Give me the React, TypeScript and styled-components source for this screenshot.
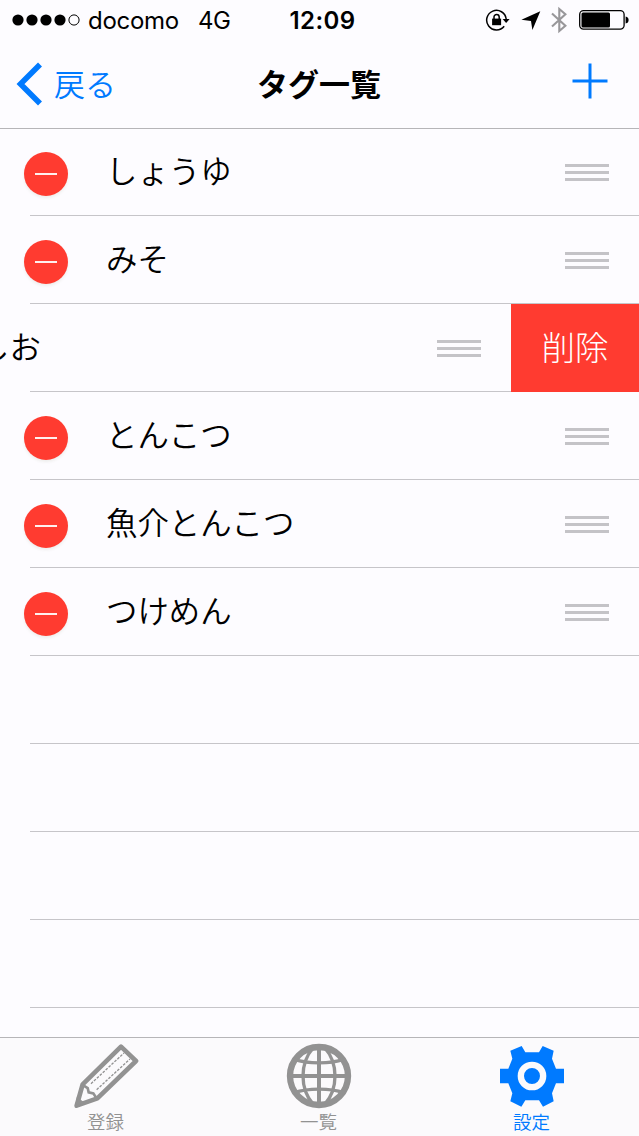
import React from 'react';
import styled, { createGlobalStyle } from 'styled-components';

const BLUE = '#007aff';
const RED = '#ff3b30';
const LINE = '#c6c5c9';
const JP = `"Noto Sans CJK JP", sans-serif`;

const GlobalStyle = createGlobalStyle`
  * { box-sizing: border-box; }
  body { margin: 0; background: #fdfcff; }
  button { border: 0; padding: 0; background: none; font: inherit; color: inherit; }
`;

const Screen = styled.div`
  width: 639px;
  height: 1136px;
  display: flex;
  flex-direction: column;
  overflow: hidden;
  background: #fdfcff;
  color: #000;
  font-family: ${JP};
`;

const Header = styled.header`
  height: 129px;
  flex: none;
  border-bottom: 1px solid #b6b5b8;
`;

const StatusBar = styled.div`
  height: 40px;
  display: grid;
  grid-template-columns: 1fr auto 1fr;
  align-items: center;
  padding: 0 8px 0 12px;
  font-family: Inter, sans-serif;
  font-size: 24px;
  line-height: 38px;
`;

const Carrier = styled.div`
  display: flex;
  align-items: center;
`;

const Signal = styled.svg`
  width: 68px;
  height: 12px;
  margin-right: 8px;
`;

const CarrierName = styled.span`
  width: 110px;
  padding-top: 2px;
  letter-spacing: -0.3px;
`;

const Network = styled.span`
  padding-top: 2px;
  letter-spacing: -0.4px;
`;

const Clock = styled.div`
  padding: 2px 0 0 2px;
  font-weight: 600;
  letter-spacing: 0.4px;
`;

const StatusIcons = styled.svg`
  width: 144px;
  height: 30px;
  justify-self: end;
  margin-right: 2px;
`;

const NavBar = styled.nav`
  height: 88px;
  display: grid;
  grid-template-columns: 1fr auto 1fr;
  align-items: center;
  padding: 0 31px 0 16px;
  font-size: 31px;
  line-height: 44px;
`;

const BackButton = styled.button`
  display: flex;
  align-items: center;
  gap: 11px;
  color: ${BLUE};
  font-weight: 350;
`;

const BackLabel = styled.span`
  padding-bottom: 2px;
`;

const Title = styled.h1`
  margin: 0;
  padding-bottom: 3px;
  font-size: 31px;
  font-weight: 700;
  transform: translateX(7px);
`;

const AddButton = styled.button`
  justify-self: end;
  display: flex;
  padding-bottom: 6px;
`;

const List = styled.ul`
  flex: 1;
  min-height: 0;
  margin: -1px 0 0;
  padding: 0;
  list-style: none;
  overflow: hidden;
`;

const Row = styled.li<{ $swiped?: boolean }>`
  height: 88px;
  display: flex;
  justify-content: ${(p) => (p.$swiped ? 'flex-end' : 'flex-start')};
  background: linear-gradient(${LINE}, ${LINE}) 30px 100% / 100% 1px no-repeat;
`;

const RowContent = styled.div`
  width: 639px;
  flex: none;
  display: flex;
  align-items: center;
  padding: 0 30px 0 24px;
`;

const RemoveButton = styled.button`
  width: 44px;
  height: 44px;
  margin: 4px 38px 0 0;
  display: flex;
  align-items: center;
  justify-content: center;
  border-radius: 50%;
  background: ${RED};
  box-shadow: 0 2px 3px rgba(90, 100, 60, 0.09);
`;

const Minus = styled.span`
  width: 22px;
  height: 2px;
  background: #fff0ee;
`;

const Label = styled.span`
  flex: 1;
  padding-bottom: 5px;
  font-size: 31.4px;
  font-weight: 350;
  line-height: 44px;
  white-space: nowrap;
`;

const Handle = styled.span`
  width: 44px;
  height: 17px;
  display: flex;
  flex-direction: column;
  justify-content: space-between;
`;

const HandleLine = styled.span`
  height: 3px;
  background: #c4c3c7;
`;

const DeleteButton = styled.button`
  width: 128px;
  height: 88px;
  flex: none;
  padding-bottom: 5px;
  background: ${RED};
  color: #fff;
  font-size: 33.5px;
  font-weight: 300;
`;

const TabBar = styled.footer`
  height: 99px;
  flex: none;
  display: grid;
  grid-template-columns: repeat(3, 213px);
  border-top: 1px solid #b6b5b8;
  background: #fbfafc;
`;

const Tab = styled.button<{ $active?: boolean }>`
  display: flex;
  flex-direction: column;
  align-items: center;
  padding: 5px 2px 0 0;
  color: ${(p) => (p.$active ? BLUE : '#929292')};
`;

const TabIcon = styled.svg`
  width: 66px;
  height: 66px;
`;

const TabLabel = styled.span`
  font-size: 18.5px;
  font-weight: 350;
  line-height: 24px;
`;

const tags = ['しょうゆ', 'みそ', 'しお', 'とんこつ', '魚介とんこつ', 'つけめん'];
const swipedTag = 'しお';
const emptyRows = 4;

function TagRow({ name, swiped }: { name: string; swiped: boolean }) {
  return (
    <Row $swiped={swiped}>
      <RowContent>
        <RemoveButton>
          <Minus />
        </RemoveButton>
        <Label>{name}</Label>
        <Handle>
          <HandleLine />
          <HandleLine />
          <HandleLine />
        </Handle>
      </RowContent>
      {swiped && <DeleteButton>削除</DeleteButton>}
    </Row>
  );
}

function PencilIcon() {
  return (
    <TabIcon viewBox="42 39 198 198" fill="none" stroke="currentColor">
      <path d="M186 50 L231 93 L115 205 L53 227 L71 163 Z" strokeWidth="14" strokeLinejoin="round" />
      <path d="M73 166 L86 174 L89 187 L103 190 L112 204" strokeWidth="8" />
      <path d="M55 204 L76 220 L50 230 Z" fill="currentColor" strokeWidth="4" />
      <path d="M96 161 L195 69 M113 179 L213 87" strokeWidth="4" strokeDasharray="8 4" />
    </TabIcon>
  );
}

function GlobeIcon() {
  return (
    <TabIcon viewBox="47 39 198 198" fill="none" stroke="currentColor" strokeWidth="10">
      <circle cx="146" cy="138" r="87" strokeWidth="19" />
      <path d="M146 46 V230 M54 138 H238" strokeWidth="12" />
      <path d="M128 54 C88 100 88 176 128 222 M164 54 C204 100 204 176 164 222" />
      <path d="M72 88 C112 102 180 102 220 88 M72 188 C112 174 180 174 220 188" />
    </TabIcon>
  );
}

function GearIcon() {
  return (
    <TabIcon viewBox="58 39 198 198" fill="currentColor">
      <path
        fillRule="evenodd"
        d="M137 67 H178 L189 48 L222 62 L217 86 L229 116 H253 V160 H229 L217 190 L222 214 L190 230 L178 211 H137 L125 230 L92 214 L98 190 L86 160 H61 V116 H86 L98 86 L92 62 L126 48 Z
           M157 95 A43 43 0 1 0 157 181 A43 43 0 1 0 157 95 Z
           M157 114 A24 24 0 1 1 157 162 A24 24 0 1 1 157 114 Z"
      />
    </TabIcon>
  );
}

export default function App() {
  return (
    <Screen>
      <GlobalStyle />
      <Header>
        <StatusBar>
          <Carrier>
            <Signal viewBox="0 0 68 12">
              {[6, 20, 34, 48].map((x) => (
                <circle key={x} cx={x} cy="6" r="5.6" />
              ))}
              <circle cx="62" cy="6" r="5.1" fill="none" stroke="#000" strokeWidth="1" />
            </Signal>
            <CarrierName>docomo</CarrierName>
            <Network>4G</Network>
          </Carrier>
          <Clock>12:09</Clock>
          <StatusIcons viewBox="485 5 144 30" fill="none" stroke="#000">
            <path d="M504.2 26.2 A9.8 9.8 0 1 1 506.2 19" strokeWidth="1.5" />
            <path d="M502.6 19 H509.6 L506.1 23 Z" fill="#000" stroke="none" />
            <rect x="492.1" y="18.6" width="9" height="6.6" fill="#000" stroke="none" />
            <path d="M494 19.5 V17 A2.6 2.6 0 0 1 499.2 17 V19.5" strokeWidth="1.5" />
            <path d="M540.3 11.2 L532.4 30 L531 21 L521.4 19.8 Z" fill="#000" stroke="none" />
            <path d="M552 13.4 L565.4 25.8 L559.3 31 V9 L565.4 14.2 L552 26.6" stroke="#98979a" strokeWidth="2.1" />
            <rect x="579.7" y="10.7" width="44.4" height="18.4" rx="3.8" strokeWidth="1.3" />
            <rect x="581.5" y="12.5" width="28.5" height="15" rx="1.5" fill="#000" stroke="none" />
            <path d="M625.6 16.5 Q628.6 17 628.6 20 T625.6 23.5 Z" fill="#000" stroke="none" />
          </StatusIcons>
        </StatusBar>
        <NavBar>
          <BackButton>
            <svg width="27" height="44" viewBox="0 0 27 44" fill="none" stroke={BLUE} strokeWidth="5.6">
              <path d="M24 2.5 L4.5 22 L24 41.5" />
            </svg>
            <BackLabel>戻る</BackLabel>
          </BackButton>
          <Title>タグ一覧</Title>
          <AddButton aria-label="add">
            <svg width="36" height="36" viewBox="0 0 36 36" stroke={BLUE} strokeWidth="3">
              <path d="M18 0.5 V35.5 M0.5 18 H35.5" />
            </svg>
          </AddButton>
        </NavBar>
      </Header>
      <List>
        {tags.map((name) => (
          <TagRow key={name} name={name} swiped={name === swipedTag} />
        ))}
        {Array.from({ length: emptyRows }, (_, i) => (
          <Row key={i} />
        ))}
      </List>
      <TabBar>
        <Tab>
          <PencilIcon />
          <TabLabel>登録</TabLabel>
        </Tab>
        <Tab>
          <GlobeIcon />
          <TabLabel>一覧</TabLabel>
        </Tab>
        <Tab $active>
          <GearIcon />
          <TabLabel>設定</TabLabel>
        </Tab>
      </TabBar>
    </Screen>
  );
}
